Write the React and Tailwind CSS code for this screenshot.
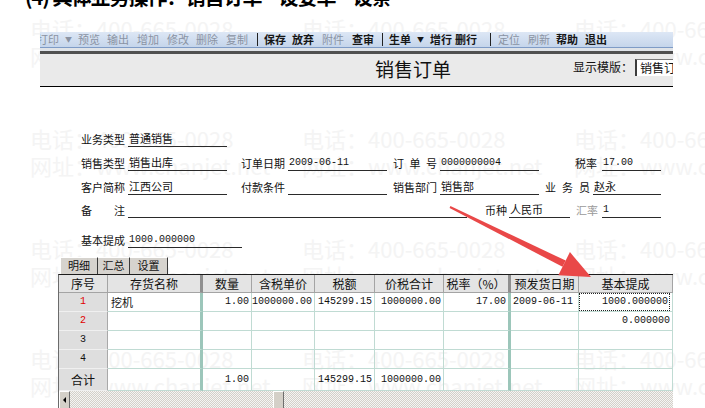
import React from 'react';

const cjk = "font-['Noto_Sans_CJK_SC',sans-serif]";
const mono = "font-['Liberation_Mono','Noto_Sans_CJK_SC',monospace]";

// toolbar buttons, left to right; `on` = enabled
const tools = [
  { t: '打印', c: 'ml-[-3px]' },
  { t: '▼', c: 'ml-[6px] text-[7px]' },
  { t: '预览', c: 'ml-[6px]' },
  { t: '输出', c: 'ml-[7px]' },
  { t: '增加', c: 'ml-[8px]' },
  { t: '修改', c: 'ml-[8px]' },
  { t: '删除', c: 'ml-[7px]' },
  { t: '复制', c: 'ml-[8px]' },
  { sep: true, c: 'ml-[9px]' },
  { t: '保存', c: 'ml-[6px]', on: true },
  { t: '放弃', c: 'ml-[6px]', on: true },
  { t: '附件', c: 'ml-[8px]' },
  { t: '查审', c: 'ml-[8px]', on: true },
  { sep: true, c: 'ml-[8px]' },
  { t: '生单', c: 'ml-[6px]', on: true },
  { t: '▼', c: 'ml-[6px] text-[7px]', on: true },
  { t: '增行', c: 'ml-[6px]', on: true },
  { t: '删行', c: 'ml-[3px]', on: true },
  { sep: true, c: 'ml-[13px]' },
  { t: '定位', c: 'ml-[7px]' },
  { t: '刷新', c: 'ml-[8px]' },
  { t: '帮助', c: 'ml-[6px]', on: true },
  { t: '退出', c: 'ml-[7px]', on: true },
];

const head = ['序号', '存货名称', '数量', '含税单价', '税额', '价税合计', '税率（%）', '预发货日期', '基本提成'];

const rows = [
  ['1', '挖机', '1.00', '1000000.00', '145299.15', '1000000.00', '17.00', '2009-06-11', '1000.000000'],
  ['2', '', '', '', '', '', '', '', '0.000000'],
  ['3', '', '', '', '', '', '', '', ''],
  ['4', '', '', '', '', '', '', '', ''],
];
const total = ['合计', '', '1.00', '', '145299.15', '1000000.00', '', '', ''];

const headBorder = [
  'border-r-[#a4a4a4]',
  'border-r-[3px] border-r-[#8f8f8f]',
  'border-r-[#a4a4a4]',
  'border-r-[#a4a4a4]',
  'border-r-[#a4a4a4]',
  'border-r-[#a4a4a4]',
  'border-r-[3px] border-r-[#8f8f8f]',
  'border-r-[#a4a4a4]',
  'border-r-[#a4a4a4]',
];

const bodyBorder = [
  'border-r-[#a9a9a9]',
  'border-r-[3px] border-r-[#9cc6ba]',
  'border-r-[#c0dbd3]',
  'border-r-[#c0dbd3]',
  'border-r-[#c0dbd3]',
  'border-r-[#c0dbd3]',
  'border-r-[3px] border-r-[#9cc6ba]',
  'border-r-[#c0dbd3]',
  'border-r-[#c0dbd3]',
];

const bodyAlign = [
  'text-center',
  'text-left pl-[3px]',
  'text-right pr-[2px]',
  'text-right pr-[2px]',
  'text-right pr-[2px]',
  'text-right pr-[2px]',
  'text-right pr-[2px]',
  'text-left pl-[2px]',
  'text-right pr-[2px]',
];

const grid = 'grid grid-cols-[49px_95px_49px_63px_60px_69px_67px_68px_94px]';

function Label({ children, w, spread, gray }) {
  if (spread) {
    return (
      <div className={`${w} mr-[3px] flex justify-between text-[11px] leading-[14px] pb-[1px] ${gray ? 'text-[#9a9a9a]' : 'text-[#111]'}`}>
        {children.split('').map((ch, i) => (
          <span key={i}>{ch}</span>
        ))}
      </div>
    );
  }
  return (
    <div className={`${w} text-[11px] leading-[14px] pb-[1px] whitespace-nowrap ${gray ? 'text-[#9a9a9a]' : 'text-[#111]'}`}>
      {children}
    </div>
  );
}

function Field({ w, children, num }) {
  return (
    <div className={`${w} h-full flex items-end border-b border-b-[#2a2a2a] pl-[1px] pb-[1px] whitespace-nowrap ${num ? `${mono} text-[10px] leading-[13px]` : 'text-[11px] leading-[14px]'} text-[#111]`}>
      {children}
    </div>
  );
}

function Watermark() {
  const blocks = [0, 1, 2, 3];
  const cols = [0, 1, 2];
  return (
    <div className={`absolute inset-0 pointer-events-none pt-[15px] pl-[30px] ${cjk} text-[22px] leading-[27px] text-[#f4f4f4]`}>
      {blocks.map((b) => (
        <div key={b} className="h-[110px]">
          <div className="flex">
            {cols.map((c) => (
              <div key={c} className="w-[272px] shrink-0 whitespace-nowrap">电话：400-665-0028</div>
            ))}
          </div>
          <div className="flex">
            {cols.map((c) => (
              <div key={c} className="w-[272px] shrink-0 whitespace-nowrap">网址：www.chanjet.net</div>
            ))}
          </div>
        </div>
      ))}
    </div>
  );
}

function Arrow() {
  return (
    <svg className="absolute left-0 top-0 pointer-events-none" width="705" height="408" viewBox="0 0 705 408">
      <polygon points="450.4,206.1 449.6,207.9 562.5,266.8 565.7,260.6" fill="#e94848" />
      <polygon points="591,277 558.3,275.3 569.9,252.1" fill="#e94848" />
    </svg>
  );
}

export default function App() {
  return (
    <div className={`relative w-[705px] h-[408px] overflow-hidden bg-white ${cjk}`}>
      <Watermark />

      <div className="relative">
        {/* section heading, top half scrolled off */}
        <div className="h-[10px] overflow-hidden pl-[25px]">
          <div className="mt-[-15px] text-[20px] leading-[24px] tracking-[-1px] font-bold text-black whitespace-nowrap">
            (4) 具体业务操作：销售订单—设要单—设条
          </div>
        </div>

        <div className="ml-[40px] w-[633px] mt-[22px]">
          {/* toolbar */}
          <div className="h-[15px] flex items-center overflow-hidden whitespace-nowrap text-[11px] leading-[15px] bg-gradient-to-b from-[#dde7f5] to-[#c5d5eb]">
            {tools.map((it, i) =>
              it.sep ? (
                <div key={i} className={`${it.c} w-px h-[13px] bg-[#222] shrink-0`} />
              ) : (
                <span key={i} className={`${it.c} shrink-0 ${it.on ? 'text-[#161616] font-bold' : 'text-[#8a93a3]'}`}>
                  {it.t}
                </span>
              )
            )}
          </div>
          <div className="h-px bg-[#7e9bc6]" />
          <div className="h-[3px] bg-[#dfe3e8]" />
          <div className="h-[3px] bg-[#505050]" />

          {/* title band */}
          <div className="h-[33px] bg-[#eaeaea] border-b border-b-black flex items-center">
            <div className="ml-[335px] text-[19px] leading-[22px] text-[#111] mt-[-3px]">销售订单</div>
            <div className="ml-auto text-[12px] leading-[14px] text-[#111] mt-[-6px]">显示模版：</div>
            <div className="ml-[2px] w-[38px] h-[17px] bg-white border-l-2 border-t border-l-[#3c3c3c] border-t-[#7a7a7a] mt-[-6px] pl-[3px] text-[12px] leading-[15px] text-[#111] overflow-hidden whitespace-nowrap">
              销售订单
            </div>
          </div>
        </div>

        {/* header fields */}
        <div className="pl-[81px] pt-[36px]">
          <div className="h-[24px] flex items-end">
            <Label w="w-[47px]">业务类型</Label>
            <Field w="w-[99px]">普通销售</Field>
          </div>
          <div className="h-[24px] flex items-end">
            <Label w="w-[47px]">销售类型</Label>
            <Field w="w-[99px]">销售出库</Field>
            <div className="w-[14px]" />
            <Label w="w-[47px]">订单日期</Label>
            <Field w="w-[99px]" num>2009-06-11</Field>
            <div className="w-[6px]" />
            <Label w="w-[44px]" spread>订单号</Label>
            <Field w="w-[99px]" num>0000000004</Field>
            <div className="w-[36px]" />
            <Label w="w-[27px]">税率</Label>
            <Field w="w-[59px]" num>17.00</Field>
          </div>
          <div className="h-[24px] flex items-end">
            <Label w="w-[47px]">客户简称</Label>
            <Field w="w-[99px]">江西公司</Field>
            <div className="w-[14px]" />
            <Label w="w-[47px]">付款条件</Label>
            <Field w="w-[99px]" />
            <div className="w-[6px]" />
            <Label w="w-[47px]">销售部门</Label>
            <Field w="w-[99px]">销售部</Field>
            <div className="w-[6px]" />
            <Label w="w-[45px]" spread>业务员</Label>
            <Field w="w-[68px]">赵永</Field>
          </div>
          <div className="h-[23px] flex items-end">
            <Label w="w-[44px]" spread>备注</Label>
            <Field w="w-[339px]" />
            <div className="w-[18px]" />
            <Label w="w-[24px]">币种</Label>
            <Field w="w-[61px]">人民币</Field>
            <div className="w-[6px]" />
            <Label w="w-[26px]" gray>汇率</Label>
            <Field w="w-[59px]" num>1</Field>
          </div>
          <div className="h-[24px] mt-[6px] flex items-end">
            <Label w="w-[47px]">基本提成</Label>
            <Field w="w-[114px]" num>1000.000000</Field>
          </div>
        </div>

        {/* tabs */}
        <div className="mt-[9px] pl-[60px] h-[17px] flex text-[11px] leading-[15px] text-[#111]">
          <div className="w-[38px] bg-[#d6d3ce] border-t border-l border-r border-t-white border-l-white border-r-[#3a3a3a] text-center">明细</div>
          <div className="w-[32px] bg-[#d6d3ce] border-t border-r border-t-white border-r-[#3a3a3a] text-center">汇总</div>
          <div className="w-[38px] bg-[#d6d3ce] border-t border-r border-t-white border-r-[#3a3a3a] text-center">设置</div>
        </div>

        {/* detail grid */}
        <div className="ml-[58px] w-[615px] border-l border-l-[#6b6b6b] border-t border-t-[#1c1c1c]">
          <div className={grid}>
            {head.map((h, i) => (
              <div key={i} className={`h-[18px] bg-[#e4e4e4] border-r border-b border-b-[#a4a4a4] ${headBorder[i]} text-center text-[12px] leading-[17px] text-[#111] whitespace-nowrap overflow-hidden`}>
                {h}
              </div>
            ))}
          </div>

          {rows.map((r, ri) => (
            <div key={ri} className={grid}>
              {r.map((v, ci) => {
                const isNum = ci >= 2 || ci === 0;
                const first = ci === 0;
                return (
                  <div
                    key={ci}
                    className={`h-[19px] border-r border-b ${bodyBorder[ci]} ${first ? 'bg-[#dedede] border-b-[#f0f0f0]' : 'border-b-[#c0dbd3]'} ${bodyAlign[ci]} ${isNum ? `${mono} text-[10px]` : 'text-[11px]'} leading-[18px] whitespace-nowrap overflow-hidden ${first && ri < 2 ? 'text-[#e00000]' : 'text-[#111]'}`}
                  >
                    {ri === 0 && ci === 8 ? (
                      <div className="h-full border border-dotted border-[#222] leading-[16px] pr-[1px]">{v}</div>
                    ) : (
                      v
                    )}
                  </div>
                );
              })}
            </div>
          ))}

          <div className={grid}>
            {total.map((v, ci) => {
              const first = ci === 0;
              return (
                <div
                  key={ci}
                  className={`h-[22px] border-r border-b ${bodyBorder[ci]} ${first ? 'bg-[#dedede] border-b-[#f0f0f0] text-[12px]' : `border-b-[#c0dbd3] ${mono} text-[10px]`} ${bodyAlign[ci]} leading-[21px] whitespace-nowrap overflow-hidden text-[#111]`}
                >
                  {v}
                </div>
              );
            })}
          </div>

          {/* horizontal scrollbar */}
          <div className="h-[17px] flex bg-[repeating-conic-gradient(#d4d0c8_0_25%,#f4f4f4_0_50%)] bg-[length:2px_2px]">
            <div className="w-[11px] h-full bg-[#d4d0c8] border-t border-l border-r border-t-white border-l-white border-r-[#6e6e6e] flex items-center justify-center">
              <div className="w-0 h-0 border-y-[3px] border-y-transparent border-r-[3px] border-r-black" />
            </div>
            <div className="ml-[203px] w-[11px] h-full bg-[#d4d0c8] border-t border-l border-r border-t-white border-l-white border-r-[#6e6e6e]" />
          </div>
        </div>
      </div>

      <Arrow />
    </div>
  );
}
